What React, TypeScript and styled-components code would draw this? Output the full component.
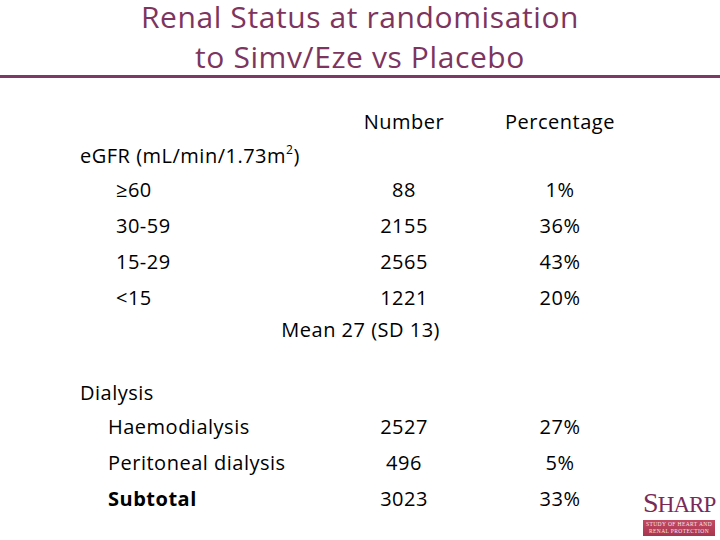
import React from "react";
import styled, { createGlobalStyle } from "styled-components";

const Global = createGlobalStyle`
  html, body { margin: 0; padding: 0; background: #fff; }
  body { font-family: "Open Sans", "Noto Sans", sans-serif; color: #000; }
`;

const Page = styled.div`
  width: 720px;
  height: 540px;
  display: flex;
  flex-direction: column;
  overflow: hidden;
  background: #fff;
`;

const Title = styled.h1`
  margin: 0;
  display: flex;
  flex-direction: column;
  align-items: center;
  gap: 7px;
  font-family: "Open Sans", "Noto Sans", sans-serif;
  font-weight: 400;
  font-size: 30px;
  letter-spacing: 0.6px;
  line-height: 33px;
  color: #7d3560;
`;

const TitleLine = styled.span`
  display: block;
  white-space: nowrap;
`;

const Rule = styled.div`
  height: 3px;
  margin-top: 2px;
  background: #7b3a63;
`;

const Content = styled.div`
  flex: 1;
  display: flex;
  align-items: flex-end;
`;

const Table = styled.div`
  align-self: flex-start;
  margin-top: 25px;
  padding-left: 80px;
  display: grid;
  grid-template-columns: 284px 80px 56px 120px;
  font-size: 20px;
  letter-spacing: 0.5px;
`;

const Cell = styled.div<{ $h?: number; $indent?: number; $align?: string; $bold?: boolean; $span?: number; $col?: number; $pr?: number }>`
  height: ${(p) => p.$h ?? 36}px;
  display: flex;
  align-items: center;
  justify-content: ${(p) => p.$align ?? "flex-start"};
  padding-left: ${(p) => p.$indent ?? 0}px;
  padding-right: ${(p) => p.$pr ?? 0}px;
  font-weight: ${(p) => (p.$bold ? 700 : 400)};
  white-space: nowrap;
  ${(p) => (p.$span ? `grid-column: span ${p.$span};` : "")}
  ${(p) => (p.$col ? `grid-column-start: ${p.$col};` : "")}
`;

const Sup = styled.sup`
  font-size: 0.6em;
  align-self: flex-start;
  margin-top: 5px;
  line-height: 1;
`;

const Spacer = styled.div<{ $h: number }>`
  grid-column: 1 / -1;
  height: ${(p) => p.$h}px;
`;

const Logo = styled.div`
  width: 72px;
  margin-left: 23px;
  margin-bottom: 4px;
  display: flex;
  flex-direction: column;
  align-items: stretch;
`;

const LogoWord = styled.div`
  font-family: "Liberation Serif", "DejaVu Serif", serif;
  color: #7a2a58;
  font-size: 23px;
  line-height: 24px;
  letter-spacing: -0.9px;
  white-space: nowrap;
  margin-bottom: 3px;
`;

const BigS = styled.span`
  font-size: 28px;
`;

const LogoBand = styled.div`
  background: linear-gradient(180deg, #c24a62 0%, #a8354f 100%);
  color: #fbe4e6;
  font-family: "Liberation Serif", serif;
  font-size: 5.5px;
  line-height: 7px;
  padding: 1px 0;
  text-align: center;
  letter-spacing: 0.4px;
  white-space: nowrap;
`;

type Row = { label: string; indent: number; num: string; pct: string; bold?: boolean };

const gfr: Row[] = [
  { label: "≥60", indent: 36, num: "88", pct: "1%" },
  { label: "30-59", indent: 36, num: "2155", pct: "36%" },
  { label: "15-29", indent: 36, num: "2565", pct: "43%" },
  { label: "<15", indent: 36, num: "1221", pct: "20%" },
];

const dial: Row[] = [
  { label: "Haemodialysis", indent: 28, num: "2527", pct: "27%" },
  { label: "Peritoneal dialysis", indent: 28, num: "496", pct: "5%" },
  { label: "Subtotal", indent: 28, num: "3023", pct: "33%", bold: true },
];

const renderRow = (r: Row) => (
  <React.Fragment key={r.label}>
    <Cell $indent={r.indent} $bold={r.bold}>{r.label}</Cell>
    <Cell $align="center">{r.num}</Cell>
    <Cell />
    <Cell $align="center">{r.pct}</Cell>
  </React.Fragment>
);

export default function App() {
  return (
    <Page>
      <Global />
      <Title>
        <TitleLine>Renal Status at randomisation</TitleLine>
        <TitleLine>to Simv/Eze vs Placebo</TitleLine>
      </Title>
      <Rule />
      <Content>
        <Table>
          <Cell $col={2} $align="center">Number</Cell>
          <Cell $col={4} $align="center">Percentage</Cell>
          <Cell $h={32} $span={4}>
            eGFR (mL/min/1.73m<Sup>2</Sup>)
          </Cell>
          {gfr.map(renderRow)}
          <Cell $h={28} $span={2} $align="flex-end" $pr={4}>Mean 27 (SD 13)</Cell>
          <Spacer $h={33} />
          <Cell $h={32} $span={4}>Dialysis</Cell>
          {dial.map(renderRow)}
        </Table>
        <Logo>
          <LogoWord>
            <BigS>S</BigS>HARP
          </LogoWord>
          <LogoBand>
            STUDY OF HEART AND
            <br />
            RENAL PROTECTION
          </LogoBand>
        </Logo>
      </Content>
    </Page>
  );
}
